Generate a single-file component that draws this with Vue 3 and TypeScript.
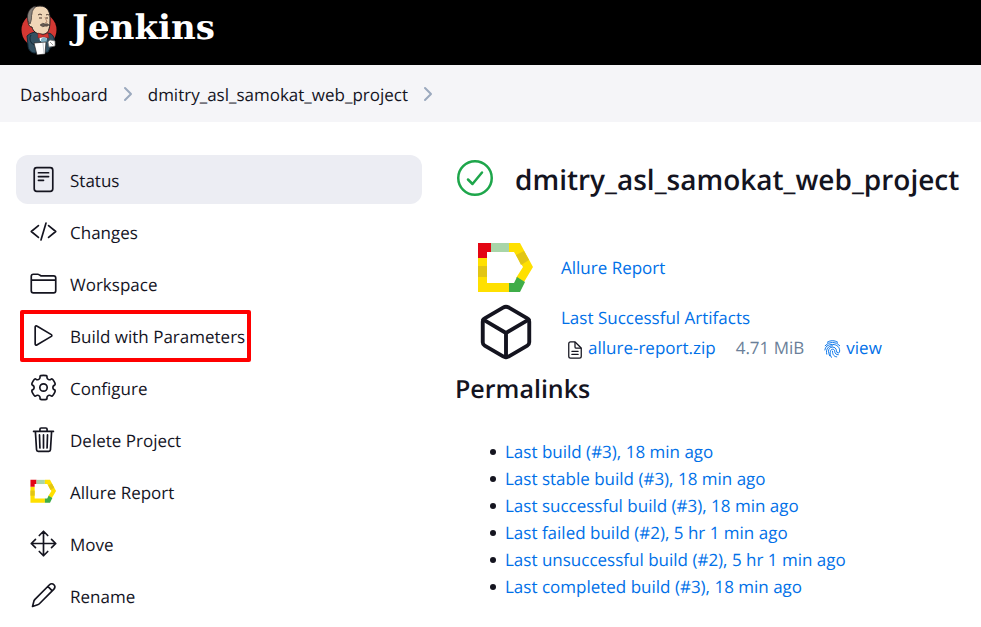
<script setup lang="ts">
type IconName =
  | 'status' | 'changes' | 'folder' | 'play' | 'gear' | 'trash' | 'allure' | 'move' | 'pencil'

interface Task {
  label: string
  icon: IconName
  active?: boolean
  marked?: boolean
}

const projectName = 'dmitry_asl_samokat_web_project'

const tasks: Task[] = [
  { label: 'Status', icon: 'status', active: true },
  { label: 'Changes', icon: 'changes' },
  { label: 'Workspace', icon: 'folder' },
  { label: 'Build with Parameters', icon: 'play', marked: true },
  { label: 'Configure', icon: 'gear' },
  { label: 'Delete Project', icon: 'trash' },
  { label: 'Allure Report', icon: 'allure' },
  { label: 'Move', icon: 'move' },
  { label: 'Rename', icon: 'pencil' },
]

const permalinks: string[] = [
  'Last build (#3), 18 min ago',
  'Last stable build (#3), 18 min ago',
  'Last successful build (#3), 18 min ago',
  'Last failed build (#2), 5 hr 1 min ago',
  'Last unsuccessful build (#2), 5 hr 1 min ago',
  'Last completed build (#3), 18 min ago',
]

// Six-toothed cog outline, corners rounded with quadratic curves.
function cogPath(cx: number, cy: number, outer: number, inner: number): string {
  const points: [number, number][] = []
  for (let i = 0; i < 6; i++) {
    const mid = -90 + i * 60
    const ring: [number, number][] = [[-17, outer], [17, outer], [19, inner + 14], [30, inner], [41, inner + 14]]
    for (const [offset, radius] of ring) {
      const angle = ((mid + offset) * Math.PI) / 180
      points.push([cx + radius * Math.cos(angle), cy + radius * Math.sin(angle)])
    }
  }
  const count = points.length
  const middle = (i: number): string => {
    const a = points[i % count]
    const b = points[(i + 1) % count]
    return `${((a[0] + b[0]) / 2).toFixed(1)} ${((a[1] + b[1]) / 2).toFixed(1)}`
  }
  let d = `M${middle(count - 1)}`
  for (let i = 0; i < count; i++) {
    d += `Q${points[i][0].toFixed(1)} ${points[i][1].toFixed(1)} ${middle(i)}`
  }
  return d + 'Z'
}

const cog = cogPath(256, 256, 242, 176)
</script>

<template>
  <div class="page">
    <header class="header">
      <a class="brand" href="#">
        <svg class="mascot" viewBox="0 0 36 50" aria-hidden="true">
          <circle cx="18" cy="25" r="17.5" fill="#d33833" />
          <path d="M6 31c3-3 7-4 10-4l10 1c4 0 6 2 7 5l1 7-5 3-2 4-14 1c-4-1-6-4-6-8z" fill="#335061" stroke="#132a38" stroke-width="1" />
          <path d="M7 14C6 7 11 1 19 1c7 0 10 5 10 12 0 4 0 8-1 11-1 4-4 6-8 5-5 0-8-3-9-7-3 0-4-3-4-8z" fill="#f0d6b7" stroke="#231f20" stroke-width="1" />
          <path d="M7 16C5 8 9 2 15 1c-2 3-4 4-4 8-1 2 0 4-1 7l-1 3z" fill="#88827c" stroke="#231f20" stroke-width=".6" />
          <path d="M17 10q2-2 4 0M25 10q1-1 3 0M18 13h3M25 13h2" fill="none" stroke="#49362c" stroke-width="1" />
          <path d="M24 12l2 5-2 1" fill="none" stroke="#b78b70" stroke-width="1" />
          <path d="M19 20q3-3 5-1 3-1 4 1-2 2-4 1-2 2-5-1z" fill="#665b54" stroke="#332b28" stroke-width=".5" />
          <path d="M18 30l3 2 4-2 1 5-7 1z" fill="#fff" />
          <path d="M17 28l5 2 5-2 1 5-6-1-5 1z" fill="#d33833" stroke="#811d1c" stroke-width=".5" />
          <path d="M20 34l3-2 3 2-1 4h-5z" fill="#81b0c4" />
          <path d="M10 30c-2 3-1 8 3 10" fill="none" stroke="#132a38" stroke-width="1" />
          <path d="M13 38l12-1-1 12-8 1z" fill="#fff" stroke="#231f20" stroke-width=".7" />
          <path d="M22 38l1 11" stroke="#c7ccd0" stroke-width="1" />
          <path d="M27 37l2-2 5 1v5l-6 1z" fill="#fff" stroke="#77716f" stroke-width=".7" />
          <path d="M29 37l3 3" stroke="#77716f" stroke-width=".7" />
        </svg>
        <span class="brand-name">Jenkins</span>
      </a>
    </header>

    <nav class="breadcrumbs" aria-label="Breadcrumbs">
      <a href="#">Dashboard</a>
      <svg class="chevron" viewBox="0 0 10 16" aria-hidden="true"><path d="M2 2l6 6-6 6" /></svg>
      <a href="#">{{ projectName }}</a>
      <svg class="chevron" viewBox="0 0 10 16" aria-hidden="true"><path d="M2 2l6 6-6 6" /></svg>
    </nav>

    <div class="body">
      <nav class="tasks" aria-label="Project tasks">
        <a
          v-for="task in tasks"
          :key="task.label"
          href="#"
          class="task"
          :class="{ active: task.active, marked: task.marked }"
        >
          <svg v-if="task.icon === 'allure'" class="task-icon" viewBox="-1 -4 58 58" aria-hidden="true">
            <path d="M0 15h9v25h22v9H0z" fill="#ffe000" />
            <path d="M0 23h9v11H0z" fill="#e2c513" />
            <path d="M0 0h13v9H9v6H0z" fill="#e30613" />
            <path d="M13 0h18v9H13z" fill="#a8d5a8" />
            <path d="M31 0h11l13 24-9 15-8-4 7-11-9-15h-5z" fill="#ffe000" />
            <path d="M38 12l8-4 5 9-8 5z" fill="#e2c513" />
            <path d="M39 34l8 5-5 10H31v-9h5z" fill="#3fad48" />
          </svg>
          <svg v-else class="task-icon line-icon" viewBox="0 0 512 512" aria-hidden="true">
            <template v-if="task.icon === 'status'">
              <rect x="80" y="32" width="352" height="448" rx="48" />
              <path d="M160 128h192M160 200h192M160 272h96" />
            </template>
            <path v-else-if="task.icon === 'changes'" d="M160 368L24 256l136-112M352 368l136-112-136-112M304 96l-96 320" />
            <path v-else-if="task.icon === 'folder'" d="M448 432H64a40 40 0 01-40-40V120a40 40 0 0140-40h84a40 40 0 0122 7l28 18a40 40 0 0022 7h228a40 40 0 0140 40v240a40 40 0 01-40 40zM24 192h464" />
            <path v-else-if="task.icon === 'play'" d="M98 96v320c0 18 17 29 31 20l276-163c12-8 12-26 0-34L129 76c-14-9-31 2-31 20z" />
            <template v-else-if="task.icon === 'gear'">
              <path :d="cog" />
              <circle cx="256" cy="256" r="70" />
            </template>
            <path v-else-if="task.icon === 'trash'" d="M102 102l22 346c1 19 14 32 32 32h200c18 0 31-13 32-32l22-346M68 102h376M188 102V62a24 24 0 0124-24h88a24 24 0 0124 24v40M256 170v246M180 170l8 246M332 170l-8 246" />
            <path v-else-if="task.icon === 'move'" d="M176 104l80-80 80 80M256 24v464M176 408l80 80 80-80M408 176l80 80-80 80M104 176l-80 80 80 80M24 256h464" />
            <path v-else d="M48 464l26-102c4-14 10-24 20-34L370 52c28-28 62-22 84 0s28 56 0 84L178 412c-10 10-20 16-34 20zM338 84l84 84" />
          </svg>
          <span class="task-label">{{ task.label }}</span>
        </a>
      </nav>

      <main class="content">
        <div class="title-row">
          <svg class="status-badge" viewBox="0 0 36 36" role="img" aria-label="Success">
            <circle cx="18" cy="17" r="16.75" />
            <path d="M11 18.500l4.500 4.500L25 11.500" />
          </svg>
          <h1>{{ projectName }}</h1>
        </div>

        <div class="summary">
          <svg class="allure-logo" viewBox="0 0 55 49" aria-hidden="true">
            <path d="M0 15h9v25h22v9H0z" fill="#ffe000" />
            <path d="M0 23h9v11H0z" fill="#e2c513" />
            <path d="M0 0h13v9H9v6H0z" fill="#e30613" />
            <path d="M13 0h18v9H13z" fill="#a8d5a8" />
            <path d="M31 0h11l13 24-9 15-8-4 7-11-9-15h-5z" fill="#ffe000" />
            <path d="M38 12l8-4 5 9-8 5z" fill="#e2c513" />
            <path d="M39 34l8 5-5 10H31v-9h5z" fill="#3fad48" />
          </svg>
          <a href="#">Allure Report</a>

          <svg class="cube line-icon" viewBox="0 0 512 512" aria-hidden="true">
            <path d="M448 341.370V170.610A32 32 0 00432.110 143l-152-88.460a47.940 47.940 0 00-48.240 0L79.890 143A32 32 0 0064 170.610v170.760A32 32 0 0079.890 369l152 88.460a48 48 0 0048.240 0l152-88.460A32 32 0 00448 341.370z" />
            <path d="M69 154l187 110 187-110M256 464V264" />
          </svg>
          <div class="artifacts">
            <a href="#">Last Successful Artifacts</a>
            <div class="artifact">
              <svg class="file-icon line-icon" viewBox="0 0 512 512" aria-hidden="true">
                <path d="M416 221.250V416a48 48 0 01-48 48H144a48 48 0 01-48-48V96a48 48 0 0148-48h98.750a32 32 0 0122.620 9.370l141.260 141.260a32 32 0 019.370 22.620z" />
                <path d="M256 56v120a32 32 0 0032 32h120M176 288h160M176 368h160" />
              </svg>
              <a href="#">allure-report.zip</a>
              <span class="size">4.71 MiB</span>
              <a class="fingerprint" href="#">
                <svg class="finger-icon" viewBox="0 0 18 20" aria-hidden="true">
                  <path d="M3.500 2.800Q9-.7 14.500 2.800M1.200 6.500Q4 3 9 3q5 0 7.700 3.500M.9 11Q1.500 5.200 9 5.200c5 0 7.700 3 7.600 7q-.1 2-1.500 2-1.800 0-1.900-2.300C13 9.300 11.300 8 9 8c-2.800 0-4.300 2-4.200 4.400q.1 2.300 1.200 4.800M2.900 15.500C1.600 10 4.500 6.600 9 6.600M7.800 18.800C6.600 16.500 6 14.600 6.900 12.400 7.100 9.500 11.200 9.500 11.300 12.300c.1 2.400 1.500 3.900 3.900 3.800M9 12.400c0 4 2 5.900 4.500 5.900" />
                </svg>
                <span>view</span>
              </a>
            </div>
          </div>
        </div>

        <h2>Permalinks</h2>
        <ul class="permalinks">
          <li v-for="link in permalinks" :key="link"><a href="#">{{ link }}</a></li>
        </ul>
      </main>
    </div>
  </div>
</template>

<style>
body {
  margin: 0;
  background: #fff;
}
</style>

<style scoped>
.page {
  color: #14141f;
  font-family: "Open Sans", "Noto Sans", sans-serif;
  font-size: 17px;
  line-height: 27px;
  text-rendering: geometricPrecision;
}

a {
  color: #0070e8;
  text-decoration: none;
}

.header {
  display: flex;
  height: 65px;
  background: #000;
}

.brand {
  display: flex;
  align-items: center;
  gap: 15px;
  height: 60px;
  padding-left: 21px;
  color: #fff;
}

.mascot {
  width: 36px;
  height: 50px;
}

.brand-name {
  padding-bottom: 4px;
  font-family: "DejaVu Serif", Georgia, serif;
  font-size: 34px;
  font-weight: 700;
}

.breadcrumbs {
  display: flex;
  align-items: center;
  gap: 15px;
  height: 56px;
  padding: 1px 20px 0;
  background: #f5f5f8;
}

.breadcrumbs a {
  color: #14141f;
}

.chevron {
  width: 10px;
  height: 16px;
  fill: none;
  stroke: #9ba9be;
  stroke-width: 2;
  stroke-linecap: round;
  stroke-linejoin: round;
}

.body {
  display: grid;
  grid-template-columns: 406px minmax(0, 1fr);
  gap: 33px;
  padding: 33px 16px 0;
}

.tasks {
  display: flex;
  flex-direction: column;
  gap: 3px;
}

.task {
  position: relative;
  display: flex;
  align-items: center;
  gap: 13px;
  height: 49px;
  padding: 0 14px;
  border-radius: 12px;
  color: #14141f;
}

.task-label {
  padding-top: 2px;
}

.task.active {
  background: #ecedf3;
}

.task.marked::after {
  content: "";
  position: absolute;
  top: -1px;
  left: 4px;
  width: 223px;
  height: 44px;
  border: 4px solid #f00;
  border-radius: 2px;
}

.task-icon {
  flex: none;
  width: 27px;
  height: 27px;
}

.line-icon {
  fill: none;
  stroke: #14141f;
  stroke-width: 32;
  stroke-linecap: round;
  stroke-linejoin: round;
}

.title-row {
  display: flex;
  align-items: center;
  gap: 22px;
  height: 48px;
  padding-left: 2px;
}

.status-badge {
  flex: none;
  width: 36px;
  height: 36px;
  overflow: visible;
  fill: none;
  stroke: #1ea64b;
  stroke-width: 2.5;
  stroke-linecap: round;
  stroke-linejoin: round;
}

h1 {
  margin: 0;
  padding-top: 2px;
  font-size: 28px;
  font-weight: 600;
  line-height: 48px;
}

.summary {
  display: grid;
  grid-template-columns: 56px minmax(0, 1fr);
  align-items: center;
  justify-items: start;
  gap: 10px 27px;
  padding: 40px 0 0 23px;
}

.allure-logo {
  width: 55px;
  height: 49px;
}

.cube {
  width: 62px;
  height: 62px;
  margin: -1px -3px;
}

.artifact {
  display: flex;
  align-items: center;
  padding: 3px 0 0 4px;
}

.file-icon {
  width: 20px;
  height: 20px;
  margin: 5px 3px 0 0;
}

.size {
  margin: 0 20px;
  color: #6b7f99;
}

.fingerprint {
  display: flex;
  align-items: center;
  gap: 5px;
}

.finger-icon {
  width: 17px;
  height: 20px;
  margin-top: 4px;
  fill: none;
  stroke: #0070e8;
  stroke-width: 1;
  stroke-linecap: round;
}

h2 {
  margin: 7px 0 0;
  font-size: 25px;
  font-weight: 600;
  line-height: 40px;
}

.permalinks {
  margin: 29px 0 0;
  padding-left: 35px;
  list-style: none;
}

.permalinks li {
  display: flex;
  align-items: center;
  gap: 9px;
}

.permalinks li::before {
  content: "";
  width: 6px;
  height: 6px;
  border-radius: 50%;
  background: #14141f;
}
</style>
